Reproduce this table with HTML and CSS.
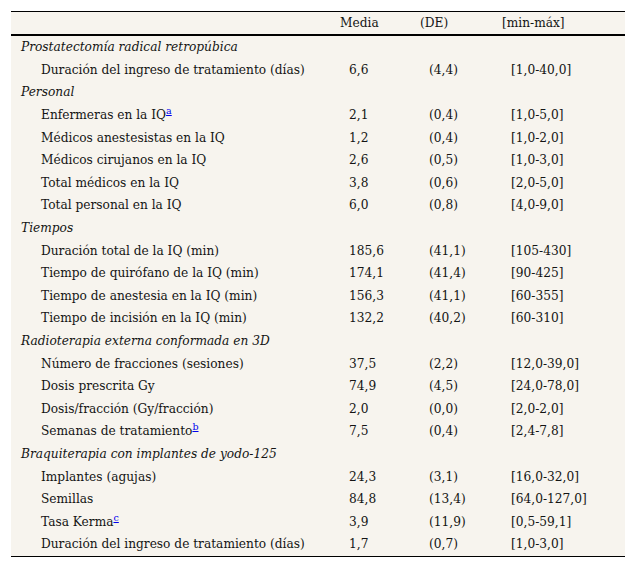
FILE: index.html
```html
<!DOCTYPE html>
<html lang="es">
<head>
<meta charset="utf-8">
<link rel="stylesheet" href="styles.css">
</head>
<body>
<table class="tbl">
  <colgroup>
    <col class="c1"><col class="c2"><col class="c3"><col class="c4">
  </colgroup>
  <thead>
    <tr><th></th><th>Media</th><th>(DE)</th><th>[min-máx]</th></tr>
  </thead>
  <tbody>
    <tr class="sec"><td colspan="4">Prostatectomía radical retropúbica</td></tr>
    <tr><td>Duración del ingreso de tratamiento (días)</td><td>6,6</td><td>(4,4)</td><td>[1,0-40,0]</td></tr>
    <tr class="sec"><td colspan="4">Personal</td></tr>
    <tr><td>Enfermeras en la IQ<sup><a href="#">a</a></sup></td><td>2,1</td><td>(0,4)</td><td>[1,0-5,0]</td></tr>
    <tr><td>Médicos anestesistas en la IQ</td><td>1,2</td><td>(0,4)</td><td>[1,0-2,0]</td></tr>
    <tr><td>Médicos cirujanos en la IQ</td><td>2,6</td><td>(0,5)</td><td>[1,0-3,0]</td></tr>
    <tr><td>Total médicos en la IQ</td><td>3,8</td><td>(0,6)</td><td>[2,0-5,0]</td></tr>
    <tr><td>Total personal en la IQ</td><td>6,0</td><td>(0,8)</td><td>[4,0-9,0]</td></tr>
    <tr class="sec"><td colspan="4">Tiempos</td></tr>
    <tr><td>Duración total de la IQ (min)</td><td>185,6</td><td>(41,1)</td><td>[105-430]</td></tr>
    <tr><td>Tiempo de quirófano de la IQ (min)</td><td>174,1</td><td>(41,4)</td><td>[90-425]</td></tr>
    <tr><td>Tiempo de anestesia en la IQ (min)</td><td>156,3</td><td>(41,1)</td><td>[60-355]</td></tr>
    <tr><td>Tiempo de incisión en la IQ (min)</td><td>132,2</td><td>(40,2)</td><td>[60-310]</td></tr>
    <tr class="sec"><td colspan="4">Radioterapia externa conformada en 3D</td></tr>
    <tr><td>Número de fracciones (sesiones)</td><td>37,5</td><td>(2,2)</td><td>[12,0-39,0]</td></tr>
    <tr><td>Dosis prescrita Gy</td><td>74,9</td><td>(4,5)</td><td>[24,0-78,0]</td></tr>
    <tr><td>Dosis/fracción (Gy/fracción)</td><td>2,0</td><td>(0,0)</td><td>[2,0-2,0]</td></tr>
    <tr><td>Semanas de tratamiento<sup><a href="#">b</a></sup></td><td>7,5</td><td>(0,4)</td><td>[2,4-7,8]</td></tr>
    <tr class="sec"><td colspan="4">Braquiterapia con implantes de yodo-125</td></tr>
    <tr><td>Implantes (agujas)</td><td>24,3</td><td>(3,1)</td><td>[16,0-32,0]</td></tr>
    <tr><td>Semillas</td><td>84,8</td><td>(13,4)</td><td>[64,0-127,0]</td></tr>
    <tr><td>Tasa Kerma<sup><a href="#">c</a></sup></td><td>3,9</td><td>(11,9)</td><td>[0,5-59,1]</td></tr>
    <tr><td>Duración del ingreso de tratamiento (días)</td><td>1,7</td><td>(0,7)</td><td>[1,0-3,0]</td></tr>
  </tbody>
</table>
</body>
</html>
```
FILE: styles.css
```css
html, body {
  margin: 0;
  padding: 0;
  background: #ffffff;
}
body {
  padding: 11px 10px 0 11px;
  font-family: "DejaVu Serif", serif;
  font-size: 12.2px;
  color: #141414;
}
.tbl {
  width: 614px;
  table-layout: fixed;
  border-collapse: collapse;
  background: #f7f4ee;
  border-top: 1px solid #000;
  border-bottom: 1px solid #000;
}
.c1 { width: 329px; }
.c2 { width: 80px; }
.c3 { width: 82px; }
.c4 { width: 123px; }
.tbl th {
  font-weight: normal;
  text-align: left;
  height: 21px;
  padding: 1px 0 0 0;
  line-height: 15px;
  border-bottom: 2px solid #000;
}
.tbl td {
  padding: 4.3px 0 3.3px 9px;
  line-height: 15px;
  white-space: nowrap;
}
.tbl td:first-child {
  padding-left: 30px;
}
.tbl tr.sec td {
  padding-left: 10px;
  font-style: italic;
}
.tbl sup {
  font-size: 9.5px;
  line-height: 0;
  vertical-align: 5px;
}
.tbl sup a {
  color: #0000ee;
  text-decoration: underline;
}
```
